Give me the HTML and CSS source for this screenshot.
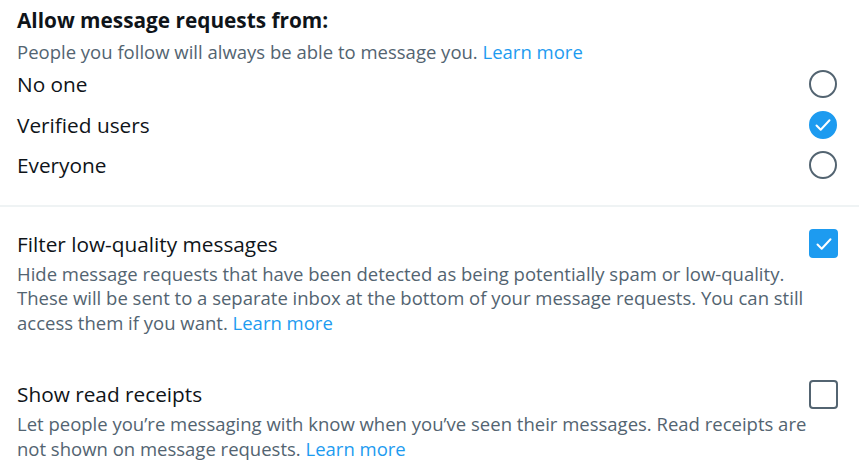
FILE: index.html
```html
<!DOCTYPE html>
<html lang="en">
<head>
  <meta charset="UTF-8" />
  <title>Direct Messages</title>
  <link rel="stylesheet" href="styles.css">
</head>
<body>
  <section class="group">
    <h2>Allow message requests from:</h2>
    <p class="desc">People you follow will always be able to message you. <a href="#">Learn more</a></p>

    <label class="option">
      <span>No one</span>
      <span class="radio"></span>
    </label>
    <label class="option">
      <span>Verified users</span>
      <span class="radio checked">
        <svg viewBox="0 0 24 24"><path d="M5.5 12.5l4.2 4.2 8.8-9.4" /></svg>
      </span>
    </label>
    <label class="option">
      <span>Everyone</span>
      <span class="radio"></span>
    </label>
  </section>

  <div class="divider"></div>

  <section class="setting">
    <div class="option">
      <span>Filter low-quality messages</span>
      <span class="box checked">
        <svg viewBox="0 0 24 24"><path d="M5.5 12.5l4.2 4.2 8.8-9.4" /></svg>
      </span>
    </div>
    <p class="desc">Hide message requests that have been detected as being potentially spam or low-quality. These will be sent to a separate inbox at the bottom of your message requests. You can still access them if you want. <a href="#">Learn more</a></p>
  </section>

  <section class="setting">
    <div class="option">
      <span>Show read receipts</span>
      <span class="box"></span>
    </div>
    <p class="desc">Let people you’re messaging with know when you’ve seen their messages. Read receipts are not shown on message requests. <a href="#">Learn more</a></p>
  </section>
</body>
</html>
```

FILE: styles.css
```css
* {
  box-sizing: border-box;
}

body {
  margin: 0;
  background: white;
  color: #0f1419;
  font-family: "Open Sans", "Noto Sans", sans-serif;
}

.group {
  padding: 4px 21px 19px 17px;
}

h2 {
  margin: 0;
  font-size: 20.8px;
  line-height: 32px;
  font-weight: 700;
}

.group .desc {
  margin-top: 3px;
  line-height: 25px;
}

.desc {
  margin: 0;
  padding-right: 30px;
  font-size: 18.5px;
  line-height: 24.5px;
  color: #536471;
}

a {
  color: #1d9bf0;
  text-decoration: none;
}

.option {
  display: flex;
  justify-content: space-between;
  align-items: center;
  height: 40.5px;
  font-size: 20.8px;
}

.setting .option {
  height: 36px;
}

.radio {
  width: 28px;
  height: 28px;
  margin-right: 1px;
  border: 2px solid #536471;
  border-radius: 50%;
  display: flex;
  align-items: center;
  justify-content: center;
}

.box {
  width: 29px;
  height: 29px;
  border: 2px solid #536471;
  border-radius: 4px;
  display: flex;
  align-items: center;
  justify-content: center;
}

.radio.checked,
.box.checked {
  background: #1d9bf0;
  border-color: #1d9bf0;
}

svg {
  width: 24px;
  height: 24px;
  flex-shrink: 0;
  fill: none;
  stroke: white;
  stroke-width: 2;
  stroke-linecap: round;
  stroke-linejoin: round;
}

.divider {
  height: 2px;
  background: #eff3f4;
}

.setting {
  padding: 19px 21px 22px 17px;
}
```
